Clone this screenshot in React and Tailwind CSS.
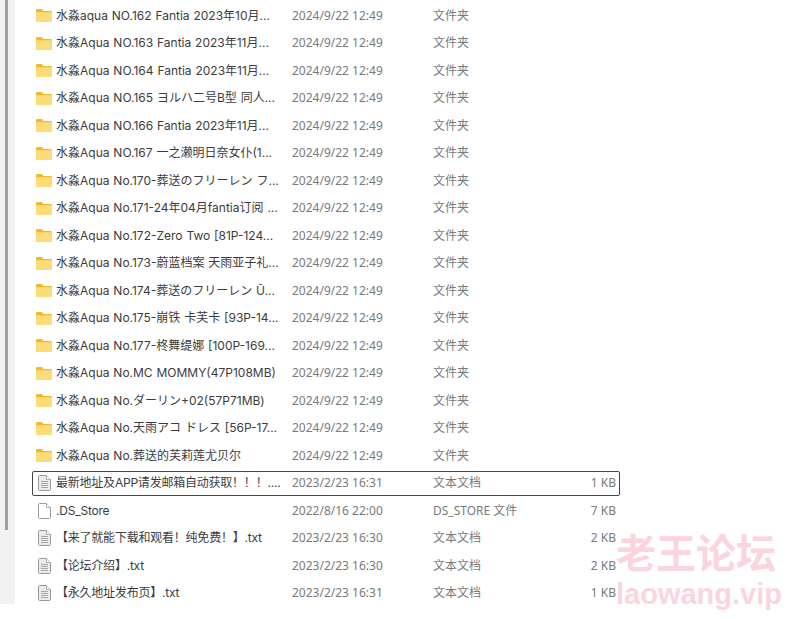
const FONT = "font-['Inter','Noto_Sans_CJK_SC',sans-serif]";

const rows = [
  { name: "水淼aqua NO.162 Fantia 2023年10月...", date: "2024/9/22 12:49", type: "文件夹", icon: "folder" },
  { name: "水淼Aqua NO.163 Fantia 2023年11月...", date: "2024/9/22 12:49", type: "文件夹", icon: "folder" },
  { name: "水淼Aqua NO.164 Fantia 2023年11月...", date: "2024/9/22 12:49", type: "文件夹", icon: "folder" },
  { name: "水淼Aqua NO.165 ヨルハ二号B型 同人...", date: "2024/9/22 12:49", type: "文件夹", icon: "folder" },
  { name: "水淼Aqua NO.166 Fantia 2023年11月...", date: "2024/9/22 12:49", type: "文件夹", icon: "folder" },
  { name: "水淼Aqua NO.167 一之濑明日奈女仆(1...", date: "2024/9/22 12:49", type: "文件夹", icon: "folder" },
  { name: "水淼Aqua No.170-葬送のフリーレン フ...", date: "2024/9/22 12:49", type: "文件夹", icon: "folder" },
  { name: "水淼Aqua No.171-24年04月fantia订阅 ...", date: "2024/9/22 12:49", type: "文件夹", icon: "folder" },
  { name: "水淼Aqua No.172-Zero Two [81P-124...", date: "2024/9/22 12:49", type: "文件夹", icon: "folder" },
  { name: "水淼Aqua No.173-蔚蓝档案 天雨亚子礼...", date: "2024/9/22 12:49", type: "文件夹", icon: "folder" },
  { name: "水淼Aqua No.174-葬送のフリーレン Ū...", date: "2024/9/22 12:49", type: "文件夹", icon: "folder" },
  { name: "水淼Aqua No.175-崩铁 卡芙卡 [93P-14...", date: "2024/9/22 12:49", type: "文件夹", icon: "folder" },
  { name: "水淼Aqua No.177-柊舞缇娜 [100P-169...", date: "2024/9/22 12:49", type: "文件夹", icon: "folder" },
  { name: "水淼Aqua No.MC MOMMY(47P108MB)", date: "2024/9/22 12:49", type: "文件夹", icon: "folder" },
  { name: "水淼Aqua No.ダーリン+02(57P71MB)", date: "2024/9/22 12:49", type: "文件夹", icon: "folder" },
  { name: "水淼Aqua No.天雨アコ ドレス [56P-17...", date: "2024/9/22 12:49", type: "文件夹", icon: "folder" },
  { name: "水淼Aqua No.葬送的芙莉莲尤贝尔", date: "2024/9/22 12:49", type: "文件夹", icon: "folder" },
  { name: "最新地址及APP请发邮箱自动获取！！！....", date: "2023/2/23 16:31", type: "文本文档", size: "1 KB", icon: "text", focused: true },
  { name: ".DS_Store", date: "2022/8/16 22:00", type: "DS_STORE 文件", size: "7 KB", icon: "blank" },
  { name: "【来了就能下载和观看！纯免费！】.txt", date: "2023/2/23 16:30", type: "文本文档", size: "2 KB", icon: "text" },
  { name: "【论坛介绍】.txt", date: "2023/2/23 16:30", type: "文本文档", size: "2 KB", icon: "text" },
  { name: "【永久地址发布页】.txt", date: "2023/2/23 16:31", type: "文本文档", size: "1 KB", icon: "text" },
];

function FolderIcon() {
  return (
    <svg width="16" height="13" viewBox="0 0 16 13" className="shrink-0">
      <path d="M0 1.5C0 .7.6 0 1.4 0h3.8c.4 0 .7.1 1 .4L7.6 2H14.6c.8 0 1.4.6 1.4 1.4v8.2c0 .8-.6 1.4-1.4 1.4H1.4C.6 13 0 12.4 0 11.6z" fill="#f2b92e" />
      <path d="M0 4.2C0 3.5.6 3.2 1.2 3.2H14.8c.7 0 1.2.4 1.2 1.1v7.3c0 .8-.6 1.4-1.4 1.4H1.4C.6 13 0 12.4 0 11.6z" fill="#fcdc78" />
    </svg>
  );
}

function FileIcon({ lines }) {
  return (
    <svg width="13" height="16" viewBox="0 0 13 16" className="shrink-0">
      <path d="M1.5.5H8.5L12.5 4.5V14.5C12.5 15 12 15.5 11.5 15.5H1.5C1 15.5 .5 15 .5 14.5V1.5C.5 1 1 .5 1.5.5Z" fill={lines ? "#ececec" : "#ffffff"} stroke="#9a9a9a" strokeWidth="1" />
      <path d="M8.5.5V4.5H12.5" fill="#ffffff" stroke="#adadad" strokeWidth="1" />
      {lines && (
        <path d="M3 6.5H10M3 8.5H10M3 10.5H10M3 12.5H10" stroke="#a8a8a8" strokeWidth="1" />
      )}
    </svg>
  );
}

function Row({ row }) {
  const isFolder = row.icon === "folder";
  return (
    <div className={`h-[27.5px] flex items-center text-[12px] ${row.focused ? "w-[590px] -ml-px pl-px outline-[1.5px] outline-[#444] -outline-offset-2 rounded-[3px]" : "w-[588px]"}`}>
      <div className="w-[24px] flex justify-center shrink-0">
        {isFolder ? <FolderIcon /> : <FileIcon lines={row.icon === "text"} />}
      </div>
      <div className={`w-[236px] whitespace-nowrap text-[#3c3c3c] shrink-0 ${isFolder ? "[word-spacing:0.5px]" : "tracking-[-0.22px]"}`}>{row.name}</div>
      <div className="w-[141px] whitespace-nowrap text-[#7a7a7a] shrink-0 font-['Noto_Sans','Noto_Sans_CJK_SC',sans-serif]">{row.date}</div>
      <div className="w-[100px] whitespace-nowrap text-[#7a7a7a] shrink-0 font-['Noto_Sans','Noto_Sans_CJK_SC',sans-serif]">{row.type}</div>
      <div className="w-[87px] pr-[4px] text-right whitespace-nowrap text-[#7a7a7a] shrink-0 font-['Noto_Sans','Noto_Sans_CJK_SC',sans-serif]">{row.size}</div>
    </div>
  );
}

export default function App() {
  return (
    <div className={`relative w-[800px] h-[619px] bg-white overflow-hidden ${FONT}`}>
      <div className="flex h-[604px]">
        {/* left pane edge with scrollbar */}
        <div className="w-[15px] shrink-0 bg-[#f2f2f2] pl-[5px]">
          <div className="w-[3px] h-[530px] bg-[#a0a0a0]" />
        </div>
        <div className="flex-1 pl-[17px] pt-[2px]">
          {rows.map((row) => (
            <Row key={row.name} row={row} />
          ))}
        </div>
      </div>
      {/* watermark */}
      <div className="absolute left-[616px] top-[531px] w-[170px] text-[#fbd5de] font-bold leading-none pointer-events-none">
        <div className="text-[40px] font-['Noto_Sans_CJK_SC',sans-serif] whitespace-nowrap">老王论坛</div>
        <div className="text-[29px] mt-[9px] font-['Liberation_Sans',sans-serif] whitespace-nowrap">laowang.vip</div>
      </div>
    </div>
  );
}
